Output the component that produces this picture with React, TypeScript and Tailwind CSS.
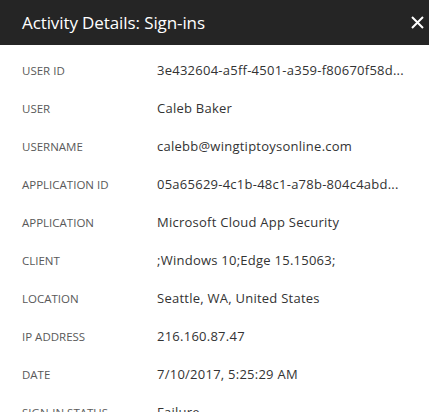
import React from 'react';

const rows = [
  { label: 'User ID', value: '3e432604-a5ff-4501-a359-f80670f58d...' },
  { label: 'User', value: 'Caleb Baker' },
  { label: 'Username', value: 'calebb@wingtiptoysonline.com' },
  { label: 'Application ID', value: '05a65629-4c1b-48c1-a78b-804c4abd...' },
  { label: 'Application', value: 'Microsoft Cloud App Security' },
  { label: 'Client', value: ';Windows 10;Edge 15.15063;' },
  { label: 'Location', value: 'Seattle, WA, United States' },
  { label: 'IP Address', value: '216.160.87.47' },
  { label: 'Date', value: '7/10/2017, 5:25:29 AM' },
  { label: 'Sign-in status', value: 'Failure' },
];

export default function App() {
  return (
    <div className="w-[429px] h-[412px] overflow-hidden bg-white font-['Open_Sans',sans-serif]">
      <div className="h-[45px] bg-[#252525] flex items-center justify-between pl-[22px] pr-[1px]">
        <h1 className="text-[17px] text-white tracking-[-0.1px]">Activity Details: Sign-ins</h1>
        <button className="w-[22px] h-[22px] flex items-center justify-center text-white">
          <svg width="13" height="13" viewBox="0 0 13 13" fill="none" stroke="currentColor" strokeWidth="2">
            <path d="M1 1l11 11M12 1L1 12" />
          </svg>
        </button>
      </div>
      <div className="pt-[7px]">
        {rows.map((row) => (
          <div key={row.label} className="h-[38px] flex items-center pl-[22px]">
            <div className="w-[135px] text-[11.5px] uppercase text-[#595959]">{row.label}</div>
            <div className="text-[13px] text-[#333333] tracking-[0.25px] whitespace-nowrap">{row.value}</div>
          </div>
        ))}
      </div>
    </div>
  );
}
